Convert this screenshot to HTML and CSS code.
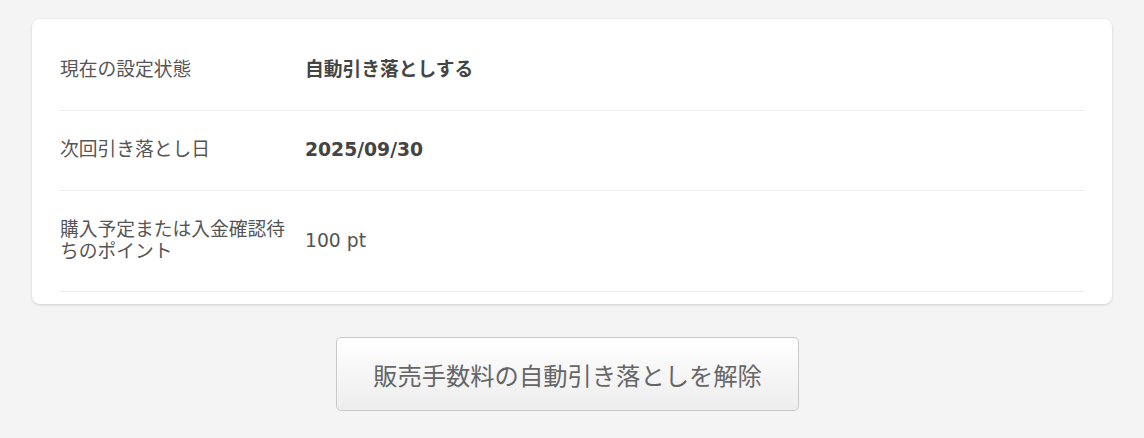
FILE: index.html
```html
<!DOCTYPE html>
<html lang="ja">
<head>
<meta charset="utf-8">
<title>自動引き落とし設定</title>
<link rel="stylesheet" href="styles.css">
</head>
<body>
<main class="page">
  <section class="card">
    <div class="row">
      <div class="label">現在の設定状態</div>
      <div class="value strong">自動引き落としする</div>
    </div>
    <div class="row">
      <div class="label">次回引き落とし日</div>
      <div class="value strong">2025/09/30</div>
    </div>
    <div class="row">
      <div class="label">購入予定または入金確認待ちのポイント</div>
      <div class="value">100 pt</div>
    </div>
  </section>
  <div class="actions">
    <button class="btn" type="button">販売手数料の自動引き落としを解除</button>
  </div>
</main>
</body>
</html>
```

FILE: styles.css
```css
html, body {
  margin: 0;
  padding: 0;
}
body {
  background: #f4f4f4;
  font-family: "DejaVu Sans", "Noto Sans CJK JP", sans-serif;
  color: #555;
}
.page {
  padding: 19px 32px 0 32px;
}
.card {
  background: #fff;
  border-radius: 8px;
  box-shadow: 0 1px 3px rgba(0, 0, 0, 0.16);
  padding: 12px 28px 12px 28px;
}
.row {
  display: grid;
  grid-template-columns: 245px 1fr;
  align-items: center;
  padding: 28px 0 29px 0;
  border-bottom: 1px solid #eeeeee;
  font-size: 18.75px;
  line-height: 22px;
}
.row:last-child {
  padding-top: 28px;
  padding-bottom: 28px;
}
.label {
  padding-right: 10px;
  color: #555;
}
.value {
  color: #555;
}
.value.strong {
  font-weight: bold;
  color: #444;
}
.actions {
  display: flex;
  justify-content: center;
  padding-top: 33px;
}
.btn {
  height: 74px;
  padding: 0 36px;
  margin-right: 9px;
  border: 1px solid #c9c9c9;
  border-radius: 5px;
  background: linear-gradient(#ffffff, #ededed);
  font-family: "Noto Sans CJK JP", sans-serif;
  font-size: 24.3px;
  color: #666;
  cursor: pointer;
}
```
